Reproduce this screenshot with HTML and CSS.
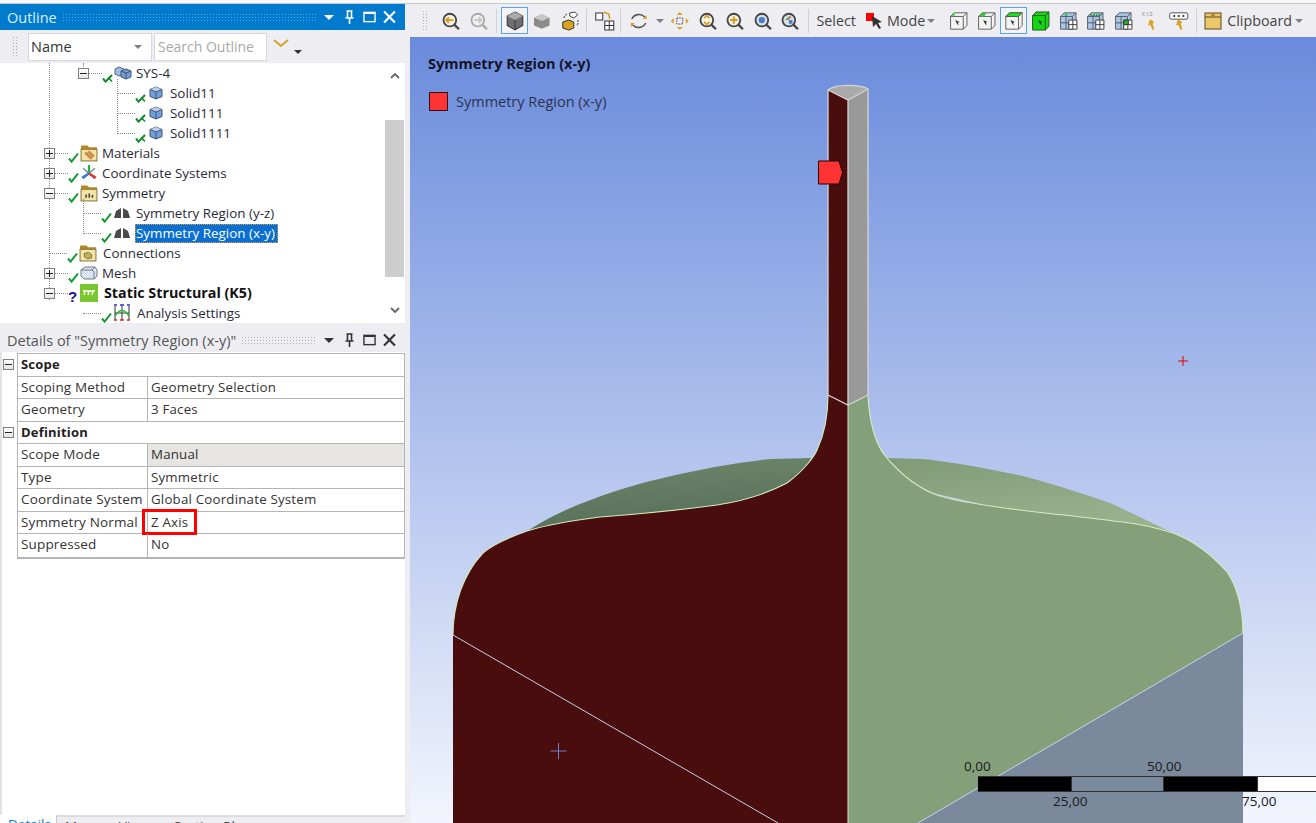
FILE: index.html
```html
<!DOCTYPE html>
<html lang="en">
<head>
<meta charset="utf-8">
<title>Symmetry Region (x-y)</title>
<link rel="stylesheet" href="styles.css">
</head>
<body>
<svg class="defs" width="0" height="0" aria-hidden="true">
  <defs>
    <linearGradient id="backL" x1="0" y1="0" x2="0.3" y2="1"><stop offset="0" stop-color="#71896d"/><stop offset="1" stop-color="#566f58"/></linearGradient>
    <linearGradient id="backR" x1="0" y1="0" x2="0.5" y2="1"><stop offset="0" stop-color="#7f9b76"/><stop offset="1" stop-color="#98b28e"/></linearGradient>
    <symbol id="ok" viewBox="0 0 11 11"><path d="M1 6.500 3.600 9.600 10 1.500" fill="none" stroke="#0f9a2a" stroke-width="2"/></symbol>
    <symbol id="okx" viewBox="0 0 11 11"><path d="M1 6.500 3.600 9.600 10 3" fill="none" stroke="#0f8a2a" stroke-width="2"/><path d="M6 5.500 10 9.500" stroke="#0f8a2a" stroke-width="1.600"/></symbol>
    <symbol id="cube" viewBox="0 0 14 14"><path d="M7 1 13 3.500V10.500L7 13 1 10.500V3.500Z" fill="#6f9fe0" stroke="#47566a"/><path d="M7 1 13 3.500 7 6 1 3.500Z" fill="#b9cdea"/><path d="M1 3.500 7 6 13 3.500M7 6V13" fill="none" stroke="#47566a"/></symbol>
    <symbol id="cubes" viewBox="0 0 18 14"><path d="M5 1 10 3V8L5 10 1 8V3Z" fill="#9dbbe6" stroke="#55657a"/><path d="M12 3 17 5V11L12 13 7 11V5Z" fill="#6f9fe0" stroke="#47566a"/><path d="M7 5 12 7 17 5M12 7V13" fill="none" stroke="#47566a"/></symbol>
    <symbol id="folder" viewBox="0 0 17 17"><path d="M1 1.500H7L8.500 3H16V6H1Z" fill="#b28a22"/><rect x="1" y="5" width="15" height="11" fill="#f3e4a5" stroke="#8c7a45"/></symbol>
    <symbol id="sym" viewBox="0 0 18 12"><path d="M1 11 3 4 8 1V11ZM10 1 15 4 17 11H10Z" fill="#4a4a4a"/></symbol>
    <symbol id="boxmini" viewBox="0 0 22 22"><path d="M2 6 6 2H20V16L16 20H2Z" fill="#f4f4f4" stroke="#555"/><path d="M2 6H16V20M16 6 20 2" fill="none" stroke="#555"/><path d="M7 10 12 12 10 13 11 16 9 14Z" fill="#333"/></symbol>
    <symbol id="mesh" viewBox="0 0 22 22"><path d="M2 6 6 2H19V16L15 20H2Z" fill="#a8c6ec" stroke="#555"/><path d="M2 6H15V20M15 6 19 2M8 6V20M2 13H15" fill="none" stroke="#555"/><path d="M11 10H20V20H11ZM15.500 10V20M11 15H20" fill="#fff" stroke="#333"/></symbol>
  </defs>
</svg>
<div class="topstrip"></div>
<main class="main">
  <aside class="side">
    <header class="paneltitle active">
      <span class="paneltitle-text">Outline</span>
      <span class="grip"></span>
      <span class="wincontrols">
        <i class="tri"></i>
        <svg class="winicon" viewBox="0 0 12 14"><path d="M3 1H9M4 1V8H8V1M2 8H10M6 8V14" fill="none" stroke="currentColor" stroke-width="1.600"/></svg>
        <svg class="winicon" viewBox="0 0 14 14"><rect x="1" y="2" width="12" height="10" fill="none" stroke="currentColor" stroke-width="1.500"/><path d="M1 3H13" stroke="currentColor" stroke-width="1.500"/></svg>
        <svg class="winicon" viewBox="0 0 12 12"><path d="M1 1 11 11M11 1 1 11" stroke="currentColor" stroke-width="2"/></svg>
      </span>
    </header>
    <div class="searchbar">
      <span class="vgrip"></span>
      <div class="combo"><span>Name</span><i class="tri grey"></i></div>
      <div class="search">Search Outline</div>
      <svg class="chev" viewBox="0 0 16 9"><path d="M1 1 8 7 15 1" fill="none" stroke="#d2a32a" stroke-width="2"/></svg>
      <i class="tri small"></i>
    </div>
    <div class="tree">
      <span class="vline v1"></span>
      <span class="vline v2"></span>
      <span class="vline v3"></span>
      <span class="vline v4"></span>
      <div class="row l2"><b class="exp minus"></b><span class="conn c13"></span><svg class="st"><use href="#okx"/></svg><svg class="ic18"><use href="#cubes"/></svg><span class="lbl g4">SYS-4</span></div>
      <div class="row l3"><span class="conn c18"></span><svg class="st"><use href="#okx"/></svg><svg class="ic14"><use href="#cube"/></svg><span class="lbl g7">Solid11</span></div>
      <div class="row l3"><span class="conn c18"></span><svg class="st"><use href="#okx"/></svg><svg class="ic14"><use href="#cube"/></svg><span class="lbl g7">Solid111</span></div>
      <div class="row l3"><span class="conn c18"></span><svg class="st"><use href="#okx"/></svg><svg class="ic14"><use href="#cube"/></svg><span class="lbl g7">Solid1111</span></div>
      <div class="row l1"><b class="exp plus"></b><span class="conn c13"></span><svg class="st"><use href="#ok"/></svg>
        <svg class="ic18" viewBox="0 0 17 17"><use href="#folder"/><path d="M5 8 11 14M8 7 13 12" stroke="#c9864a" stroke-width="2.500"/></svg><span class="lbl g4">Materials</span></div>
      <div class="row l1"><b class="exp plus"></b><span class="conn c13"></span><svg class="st"><use href="#ok"/></svg>
        <svg class="ic18" viewBox="0 0 17 17"><path d="M3 4 14 14M14 4 3 14" stroke="#7d8794" stroke-width="1.400"/><path d="M8.500 8V1" stroke="#1bb53a" stroke-width="2"/><path d="M8.500 9 2 13" stroke="#2f7fe0" stroke-width="2.400"/><path d="M8.500 9 15 13" stroke="#e0352f" stroke-width="2.400"/></svg><span class="lbl g4">Coordinate Systems</span></div>
      <div class="row l1"><b class="exp minus"></b><span class="conn c13"></span><svg class="st"><use href="#ok"/></svg>
        <svg class="ic18" viewBox="0 0 17 17"><use href="#folder"/><path d="M5 13V10H6.500V13ZM8 13V9H9.500V13ZM11 13V10.500H12.500V13Z" fill="#444"/></svg><span class="lbl g4">Symmetry</span></div>
      <div class="row l2leaf"><span class="conn c18"></span><svg class="st"><use href="#ok"/></svg><svg class="ic18 sym"><use href="#sym"/></svg><span class="lbl g5">Symmetry Region (y-z)</span></div>
      <div class="row l2leaf"><span class="conn c18"></span><svg class="st"><use href="#ok"/></svg><svg class="ic18 sym"><use href="#sym"/></svg><span class="lbl sel">Symmetry Region (x-y)</span></div>
      <div class="row l1leaf"><span class="conn c18"></span><svg class="st"><use href="#ok"/></svg>
        <svg class="ic18" viewBox="0 0 17 17"><use href="#folder"/><path d="M5 9 9 8 12 10V13L8 14 5 12Z" fill="#c6b05a" stroke="#6d5f33" stroke-width=".8"/></svg><span class="lbl g6">Connections</span></div>
      <div class="row l1"><b class="exp plus"></b><span class="conn c13"></span><svg class="st"><use href="#ok"/></svg>
        <svg class="ic18" viewBox="0 0 18 14"><path d="M1 4 5 1H15L17 4V10L14 13H4L1 10Z" fill="#dbe5f0" stroke="#6c7b8c"/><path d="M1 4H12L14 6V13M12 4 15 1" fill="none" stroke="#6c7b8c"/></svg><span class="lbl g4">Mesh</span></div>
      <div class="row l1"><b class="exp minus"></b><span class="conn c13"></span><span class="qm">?</span>
        <svg class="ic18" viewBox="0 0 18 18"><rect width="18" height="18" fill="#7ac62f"/><path d="M3 7H15M5 7 4 11M9 7 8 11M13 7 12 11" stroke="#fff" stroke-width="1.400" fill="none"/></svg><span class="lbl strong">Static Structural (K5)</span></div>
      <div class="row l2leaf"><span class="conn c18"></span><svg class="st"><use href="#ok"/></svg>
        <svg class="ic18" viewBox="0 0 18 18"><path d="M2 2V16M9 2V16M16 2V16M2 9H16" stroke="#333" fill="none"/><path d="M1 1H4M7 1H11M14 1H17" stroke="#2b2bd0" stroke-width="1.600"/><path d="M1 16H4M7 16H11M14 16H17" stroke="#e02020" stroke-width="1.600"/><path d="M2 12Q9 1 16 12" fill="none" stroke="#22c03a" stroke-width="1.500"/></svg><span class="lbl g6">Analysis Settings</span></div>
      <div class="scrollbar">
        <svg class="sarrow" viewBox="0 0 10 6"><path d="M1 5 5 1 9 5" fill="none" stroke="#666" stroke-width="1.800"/></svg>
        <div class="strack"><div class="sthumb"></div></div>
        <svg class="sarrow" viewBox="0 0 10 6"><path d="M1 1 5 5 9 1" fill="none" stroke="#666" stroke-width="1.800"/></svg>
      </div>
    </div>
    <header class="paneltitle detailstitle">
      <span class="paneltitle-text">Details of "Symmetry Region (x-y)"</span>
      <span class="grip"></span>
      <span class="wincontrols">
        <i class="tri"></i>
        <svg class="winicon" viewBox="0 0 12 14"><path d="M3 1H9M4 1V8H8V1M2 8H10M6 8V14" fill="none" stroke="currentColor" stroke-width="1.600"/></svg>
        <svg class="winicon" viewBox="0 0 14 14"><rect x="1" y="2" width="12" height="10" fill="none" stroke="currentColor" stroke-width="1.500"/><path d="M1 3H13" stroke="currentColor" stroke-width="1.500"/></svg>
        <svg class="winicon" viewBox="0 0 12 12"><path d="M1 1 11 11M11 1 1 11" stroke="currentColor" stroke-width="2"/></svg>
      </span>
    </header>
    <div class="details">
      <div class="dtable">
        <div class="drow head"><b class="exp minus out"></b><span class="dhead">Scope</span></div>
        <div class="drow"><span class="dk">Scoping Method</span><span class="dv">Geometry Selection</span></div>
        <div class="drow"><span class="dk">Geometry</span><span class="dv">3 Faces</span></div>
        <div class="drow head"><b class="exp minus out"></b><span class="dhead">Definition</span></div>
        <div class="drow"><span class="dk">Scope Mode</span><span class="dv ro">Manual</span></div>
        <div class="drow"><span class="dk">Type</span><span class="dv">Symmetric</span></div>
        <div class="drow"><span class="dk">Coordinate System</span><span class="dv">Global Coordinate System</span></div>
        <div class="drow"><span class="dk">Symmetry Normal</span><span class="dv">Z Axis<span class="redbox"></span></span></div>
        <div class="drow"><span class="dk">Suppressed</span><span class="dv">No</span></div>
      </div>
    </div>
    <nav class="tabs">
      <span class="tab on">Details</span>
      <span class="tab">Manage Views</span>
      <span class="tab">Section Planes</span>
    </nav>
  </aside>
  <section class="work">
    <div class="toolbar">
      <span class="vgrip"></span>
      <svg class="t w27" viewBox="0 0 22 22"><circle cx="10" cy="10" r="7" fill="#f6f3e6" stroke="#444" stroke-width="2"/><path d="M15 15 20 20" stroke="#444" stroke-width="2.500"/><path d="M6 10H14M9 7 6 10 9 13" fill="none" stroke="#d99a1c" stroke-width="2"/></svg>
      <svg class="t w27 dim" viewBox="0 0 22 22"><circle cx="10" cy="10" r="7" fill="#f3f3f3" stroke="#999" stroke-width="2"/><path d="M15 15 20 20" stroke="#999" stroke-width="2.500"/><path d="M6 10H14M11 7 14 10 11 13" fill="none" stroke="#bbb" stroke-width="2"/></svg>
      <i class="tsep"></i>
      <span class="tbox"><svg viewBox="0 0 18 18"><path d="M9 1 16 4.500V13L9 17 2 13V4.500Z" fill="#6e6e6e" stroke="#3c3c3c"/><path d="M9 1 16 4.500 9 8 2 4.500Z" fill="#a9a9a9"/><path d="M9 8V17" stroke="#3c3c3c"/></svg></span>
      <svg class="t w27" viewBox="0 0 18 18"><path d="M9 3 16 6V13L9 16 2 13V6Z" fill="#8b8b8b"/><path d="M9 3 16 6 9 9 2 6Z" fill="#c6c6c6"/></svg>
      <svg class="t w27" viewBox="0 0 20 20"><path d="M3 11 9 9 14 11V17L9 19 3 17Z" fill="#d9a21f" stroke="#333"/><path d="M10 2 15 1 18 4 14 7 10 5Z" fill="#fff" stroke="#444"/><path d="M4 7A8 8 0 0 1 8 2.500M18 9A8 8 0 0 1 17 15" fill="none" stroke="#666" stroke-width="1.300" stroke-dasharray="2 1"/></svg>
      <i class="tsep gap8"></i>
      <svg class="t w27" viewBox="0 0 20 20"><rect x="1" y="2" width="7" height="7" fill="#fff" stroke="#333"/><rect x="10" y="10" width="9" height="9" fill="#fff" stroke="#333"/><path d="M14.500 10V19M10 14.500H19" stroke="#333"/><path d="M9 1 14 3 15 8" fill="none" stroke="#d99a1c" stroke-width="1.500"/></svg>
      <i class="tsep tight"></i>
      <svg class="t w27" viewBox="0 0 20 20"><path d="M3 8A8 8 0 0 1 16 6" fill="none" stroke="#555" stroke-width="1.600"/><path d="M17 12A8 8 0 0 1 4 14" fill="none" stroke="#555" stroke-width="1.600"/><path d="M14 8H18V4ZM6 12H2V16Z" fill="#d9a21f"/></svg>
      <i class="tri grey tb"></i>
      <svg class="t w27" viewBox="0 0 20 20"><path d="M10 1 13 4H7ZM10 19 7 16H13ZM1 10 4 7V13ZM19 10 16 13V7Z" fill="#d9a21f"/><path d="M7 7H13V13H7Z" fill="none" stroke="#444" stroke-dasharray="1.500 1"/></svg>
      <svg class="t w27" viewBox="0 0 22 22"><circle cx="10" cy="10" r="7" fill="#f6f3e6" stroke="#444" stroke-width="2"/><path d="M15 15 20 20" stroke="#444" stroke-width="2.500"/><path d="M7 8 10 5 13 8M7 12 10 15 13 12" fill="none" stroke="#d99a1c" stroke-width="1.800"/></svg>
      <svg class="t w27" viewBox="0 0 22 22"><circle cx="10" cy="10" r="7" fill="#f6f3e6" stroke="#444" stroke-width="2"/><path d="M15 15 20 20" stroke="#444" stroke-width="2.500"/><path d="M6 10H14M10 6V14" stroke="#d99a1c" stroke-width="2.200"/></svg>
      <svg class="t w27" viewBox="0 0 22 22"><circle cx="10" cy="10" r="7" fill="#d8e0e8" stroke="#444" stroke-width="2"/><path d="M15 15 20 20" stroke="#444" stroke-width="2.500"/><circle cx="10" cy="10" r="3.500" fill="#4a7fc0"/></svg>
      <svg class="t w27" viewBox="0 0 22 22"><circle cx="10" cy="10" r="7" fill="#d8e0e8" stroke="#444" stroke-width="2"/><path d="M15 15 20 20" stroke="#444" stroke-width="2.500"/><path d="M6 10H10V6Z" fill="#3fae49"/><path d="M10 10H14V14H10Z" fill="#4a7fc0"/><path d="M10 6H13L10 10Z" fill="#d9574a"/></svg>
      <i class="tsep"></i>
      <span class="tlabel select">Select</span>
      <svg class="modeicon" viewBox="0 0 18 18"><rect x="0" y="1" width="8" height="8" fill="#f00"/><path d="M6 4 16 10 12 11 15 16 13 17 10 12 7 15Z" fill="#333"/></svg>
      <span class="tlabel mode">Mode</span><i class="tri grey tb2"></i>
      <span class="boxes">
        <svg class="t w27" viewBox="0 0 22 22"><use href="#boxmini"/><circle cx="5" cy="4" r="1.500" fill="#2ecc2e"/></svg>
        <svg class="t w27" viewBox="0 0 22 22"><use href="#boxmini"/><path d="M3 6 6 2H11L8 6Z" fill="#2ecc2e"/></svg>
        <span class="tbox"><svg viewBox="0 0 22 22"><use href="#boxmini"/><path d="M2 6 6 2H20L16 6Z" fill="#19e619" stroke="#555"/></svg></span>
        <svg class="t w27" viewBox="0 0 22 22"><path d="M2 5 6 1H20V17L16 21H2Z" fill="#14d714" stroke="#205020"/><path d="M2 5H16V21M16 5 20 1" fill="none" stroke="#205020"/><path d="M8 10 13 12 11 13 12 16 10 14Z" fill="#234"/></svg>
        <svg class="t w27" viewBox="0 0 22 22"><use href="#mesh"/><circle cx="8" cy="4" r="1.500" fill="#2ecc2e"/></svg>
        <svg class="t w27" viewBox="0 0 22 22"><use href="#mesh"/><path d="M5 4.500H16" stroke="#2a9a2a" stroke-width="2" stroke-dasharray="2 1"/></svg>
        <svg class="t w27" viewBox="0 0 22 22"><use href="#mesh"/><path d="M11 10H16V15H11Z" fill="#2ab02a" stroke="#333"/></svg>
        <svg class="t w27" viewBox="0 0 22 22"><text x="1" y="6" class="xyz">X.Y.Z</text><path d="M10 9 15 12 13 14 15 20 13 21 10.500 15 8 16Z" fill="#d9a21f"/></svg>
        <svg class="t w27" viewBox="0 0 22 22"><rect x="1" y="2" width="20" height="7" rx="2" fill="#fff" stroke="#444"/><path d="M5 5.500H7M10 5.500H12M15 5.500H17" stroke="#444" stroke-width="2"/><path d="M10 9 15 12 13 14 15 20 13 21 10.500 15 8 16Z" fill="#d9a21f"/></svg>
      </span>
      <i class="tsep"></i>
      <svg class="t clip" viewBox="0 0 18 18"><rect x="1" y="1" width="16" height="16" fill="#edc868" stroke="#5a4a20"/><path d="M1 5H17" stroke="#5a4a20"/><path d="M7 1H11V4H7Z" fill="#b58c2d"/></svg>
      <span class="tlabel">Clipboard</span><i class="tri grey tb3"></i>
    </div>
    <div class="viewport">
      <svg class="model" viewBox="410 37 906 786" preserveAspectRatio="none">
        <path class="backleft" d="M527 531C545 520 560 512 580 504C610 492 640 483 667 477C700 469 740 462 770 459L811 458L800 480L720 510Z"/>
        <path class="backright" d="M887 458L923 459C960 463 995 470 1027 477C1055 485 1085 494 1110 503C1132 513 1152 523 1173 533L1050 520L920 490Z"/>
        <path class="grey" d="M1243 633 V823H918Z"/>
        <path class="green" d="M848 405 868 395C869 420 875 445 887 458C900 474 920 490 940 496C960 502 1000 508 1053 514C1085 517 1105 520 1123 522C1140 524 1160 529 1173 533C1192 540 1211 554 1227 572C1235 583 1243 605 1243 633L918 823H848Z"/>
        <path class="red" d="M828 395 848 405V823H453V635C453 605 463 574 483 553C493 544 510 537 527 531C550 524 575 520 600 517C640 514 680 510 717 505C750 500 770 492 787 483C805 470 815 455 817 450C824 435 828 415 828 395Z"/>
        <path class="edge-g" d="M868 395C869 420 875 445 887 458C900 474 920 490 940 496C960 502 1000 508 1053 514C1085 517 1105 520 1123 522C1140 524 1160 529 1173 533C1192 540 1211 554 1227 572C1235 583 1243 605 1243 633"/>
        <path class="edge-g" d="M828 395C828 415 824 435 817 450C815 455 805 470 787 483C770 492 750 500 717 505C680 510 640 514 600 517C575 520 550 524 527 531C510 537 493 544 483 553C463 574 453 605 453 635"/>
        <path class="edge-w" d="M453 635 778 823M1243 633 918 823"/>
        <path class="red" d="M828 90 848 100V405L828 395Z"/>
        <path class="col" d="M848 100 868 89V395L848 405Z"/>
        <path class="captop" d="M828 90C835 84 860 84 868 89L848 100Z"/>
        <path class="edge-l" d="M828 395V90C835 84 860 84 868 89V395M828 90 848 100 868 89M848 100V405M828 395 848 405 868 395"/>
        <path class="edge-front" d="M848 405V823"/>
        <path class="marker" d="M818.500 161H839L842.500 172.500 839 184H818.500Z"/>
        <path class="bluecross" d="M558.500 743V759M550.500 751H566.500"/>
        <path class="redcross" d="M1183 356V366M1178 361H1188"/>
      </svg>
      <div class="legend">
        <div class="legend-title">Symmetry Region (x-y)</div>
        <div class="legend-item"><i class="swatch"></i><span>Symmetry Region (x-y)</span></div>
      </div>
      <div class="scale">
        <div class="scale-top"><span class="s0">0,00</span><span class="s50">50,00</span></div>
        <div class="bar"><i class="black"></i><i class="clear"></i><i class="black"></i><i class="white"></i></div>
        <div class="scale-bot"><span class="s25">25,00</span><span class="s75">75,00</span></div>
      </div>
    </div>
  </section>
</main>
</body>
</html>
```
FILE: styles.css
```css
* { box-sizing: border-box; }
html, body { margin: 0; height: 823px; overflow: hidden; }
body {
  width: 1316px;
  display: flex;
  flex-direction: column;
  background: #f0f0f4;
  font-family: "Open Sans", "Noto Sans", sans-serif;
  font-size: 13.400px;
  color: #222;
}
.defs { position: absolute; }
.topstrip { height: 4px; flex: none; background: #f7f7f7; border-bottom: 1px solid #c9c9cc; }
.main { flex: 1; display: flex; min-height: 0; }

/* left column */
.side { width: 410px; flex: none; display: flex; flex-direction: column; background: #eeeef2; padding-right: 5px; }
.paneltitle { height: 27px; flex: none; display: flex; align-items: center; padding: 0 9px 0 7px; color: #444; font-size: 14.500px; background: #eeeef2; }
.paneltitle.active { background: #007acc; color: #fff; height: 26px; }
.detailstitle { height: 29px; padding-top: 5px; }
.paneltitle-text { white-space: nowrap; color: #555; }
.active .paneltitle-text { color: #dceefa; }
.grip { flex: 1; height: 8px; margin: 0 8px 0 5px; background-image: radial-gradient(circle, rgba(120,120,120,.5) .7px, transparent .8px); background-size: 3px 3px; }
.active .grip { background-image: radial-gradient(circle, rgba(255,255,255,.35) .7px, transparent .8px); }
.wincontrols { display: flex; align-items: center; gap: 7px; }
.wincontrols .tri { margin-right: 2px; }
.winicon { width: 13px; height: 14px; color: #333; }
.active .winicon { color: #fff; }
.tri { display: block; width: 0; height: 0; border-left: 5px solid transparent; border-right: 5px solid transparent; border-top: 5px solid #333; }
.active .tri { border-top-color: #fff; }
.tri.grey { border-top-color: #808080; border-left-width: 4px; border-right-width: 4px; border-top-width: 4px; }
.tri.small { border-left-width: 4px; border-right-width: 4px; border-top-width: 4px; margin: 10px 0 0 5px; }

.searchbar { height: 33px; flex: none; display: flex; align-items: center; padding-left: 12px; background: #eeeef2; }
.vgrip { width: 7px; height: 22px; background-image: radial-gradient(circle, #aaa .8px, transparent .9px); background-size: 3px 3px; flex: none; }
.combo { width: 124px; height: 28px; margin-left: 9px; display: flex; align-items: center; justify-content: space-between; padding: 0 9px 0 2px; background: #fff; border: 1px solid #d6d6e0; font-size: 14.500px; color: #333; }
.search { width: 113px; height: 28px; margin-left: 2px; display: flex; align-items: center; padding-left: 3px; background: #fff; border: 1px solid #d6d6e0; color: #a9a9a9; font-size: 14px; white-space: nowrap; }
.chev { width: 16px; height: 9px; margin: 0 0 6px 6px; }

.tree { position: relative; height: 260px; flex: none; background: #fff; overflow: hidden; }
.row { height: 20px; display: flex; align-items: center; white-space: nowrap; }
.l1 { padding-left: 44px; }
.l1leaf { padding-left: 49px; }
.l2 { padding-left: 78px; }
.l2leaf { padding-left: 83px; }
.l3 { padding-left: 117px; }
.exp { display: block; flex: none; width: 11px; height: 11px; border: 1px solid #808080; background: linear-gradient(#fff, #e6e6e6); position: relative; }
.exp::before { content: ""; position: absolute; left: 1px; right: 1px; top: 4px; height: 1px; background: #222; }
.plus::after { content: ""; position: absolute; top: 1px; bottom: 1px; left: 4px; width: 1px; background: #222; }
.conn { flex: none; height: 0; border-top: 1px dotted #888; }
.c13 { width: 13px; }
.c18 { width: 18px; }
.st { flex: none; width: 11px; height: 11px; margin-top: 8px; }
.qm { flex: none; width: 11px; margin-top: 6px; color: #14148c; font: bold 15px "Liberation Sans", sans-serif; }
.ic18 { flex: none; width: 18px; height: 18px; margin-left: 1px; }
.ic18.sym { height: 12px; }
.l3 .st { margin-right: 3px; }
.ic14 { flex: none; width: 14px; height: 14px; }
.lbl { color: #2a2a3a; }
.g4 { margin-left: 4px; }
.g5 { margin-left: 5px; }
.g6 { margin-left: 6px; }
.g7 { margin-left: 7px; }
.sel { margin-left: 4px; padding: 0 3px 0 1px; height: 19px; line-height: 18px; background: #0a6fd0; color: #fff; outline: 1px dotted #e0a040; outline-offset: -1px; }
.strong { margin-left: 6px; font-weight: 700; font-size: 14.300px; line-height: 18px; margin-bottom: 1px; color: #111; }
.vline { position: absolute; width: 0; border-left: 1px dotted #888; }
.v1 { left: 49px; top: 0; height: 237px; }
.v2 { left: 83px; top: 0; height: 6px; }
.v3 { left: 117px; top: 16px; height: 55px; }
.v4 { left: 83px; top: 136px; height: 35px; }
.scrollbar { position: absolute; right: 1px; top: 0; bottom: 0; width: 19px; display: flex; flex-direction: column; align-items: center; background: #fff; }
.sarrow { width: 10px; height: 6px; margin: 10px 0; flex: none; }
.strack { flex: 1; width: 100%; position: relative; }
.sthumb { position: absolute; left: 0; right: 0; top: 31px; height: 157px; background: #cdcdcd; }

.details { flex: 1; min-height: 0; background: #fff; padding: 1px 0 0 15px; border-left: 2px solid #e4e4e8; position: relative; }
.dtable { border: 1px solid #b5b5b5; border-bottom-width: 2px; }
.drow { height: 22.500px; display: flex; align-items: stretch; border-bottom: 1px solid #b5b5b5; position: relative; white-space: nowrap; color: #333; line-height: 20px; letter-spacing: .2px; }
.drow:last-child { border-bottom: 0; }
.dk { width: 130px; flex: none; padding-left: 3px; border-right: 1px solid #b5b5b5; font-size: 13.500px; letter-spacing: .15px; }
.dv { flex: 1; padding-left: 3px; position: relative; font-size: 13.300px; }
.dv.ro { background: #e6e5e1; }
.dhead { padding-left: 3px; font-weight: 700; font-size: 13px; color: #222; }
.exp.out { position: absolute; left: -15px; top: 5px; }
.redbox { position: absolute; left: -6px; top: -3px; width: 55px; height: 26px; border: 3px solid #f00; }

.tabs { height: 8px; flex: none; display: flex; background: #eeeef2; border-top: 2px solid #dadae2; font-size: 13.500px; }
.tab { padding: 0 0 0 8px; margin-right: 11px; line-height: 18px; height: 30px; color: #444; white-space: nowrap; }
.tab.on { width: 57px; margin-right: 0; color: #007acc; background: #fff; border-right: 1px solid #c8c8d0; margin-top: -2px; }

/* right column */
.work { flex: 1; min-width: 0; display: flex; flex-direction: column; }
.toolbar { height: 33px; flex: none; display: flex; align-items: center; padding-left: 12px; background: #eeeef2; }
.t { flex: none; height: 20px; }
.w27 { width: 27.500px; }
.toolbar .vgrip { margin-right: 8px; }
.dim { opacity: .8; }
.tsep { flex: none; width: 1px; height: 24px; background: #d0d0d6; margin: 0 4px; }
.tsep.gap8 { margin-left: 3px; margin-right: 4px; }
.tsep.tight { margin-left: 1px; margin-right: 4px; }
.tbox { flex: none; width: 27px; height: 27px; border: 1px solid #55a5ee; background: #f4f4f8; display: flex; align-items: center; justify-content: center; }
.tbox svg { width: 20px; height: 20px; }
.tri.tb { margin: 0 2px 0 4px; }
.tlabel { font-size: 14.300px; color: #444; white-space: nowrap; }
.select { margin-left: 4px; }
.modeicon { width: 18px; height: 18px; margin-left: 10px; flex: none; }
.mode { margin-left: 3px; }
.tri.tb2 { margin: 0 10px 0 2px; }
.boxes { display: flex; align-items: center; }
.clip { width: 18px; margin: 0 5px 0 3px; }
.tri.tb3 { margin-left: 3px; }
.xyz { font: 5px "Liberation Sans", sans-serif; fill: #888; }

.viewport { flex: 1; position: relative; overflow: hidden; background: linear-gradient(#6a8bdc, #f2f5fd); }
.model { position: absolute; inset: 0; width: 100%; height: 100%; }
.red { fill: #4a0d0d; }
.green { fill: #84a07a; }
.grey { fill: #7a8a9c; }
.backleft { fill: url(#backL); }
.backright { fill: url(#backR); }
.col { fill: #999; }
.captop { fill: #aaa; }
.edge-g { fill: none; stroke: #d4ecc0; stroke-width: 1.100; }
.edge-w { fill: none; stroke: #c0cfe6; stroke-width: 1; }
.edge-l { fill: none; stroke: #d4d4d4; stroke-width: 1.300; }
.edge-front { fill: none; stroke: #d4e4c8; stroke-width: 1; }
.marker { fill: #ff3333; stroke: #200; stroke-width: 1; }
.bluecross { fill: none; stroke: #6e7fc0; stroke-width: 1; }
.redcross { fill: none; stroke: #e00000; stroke-width: 1; }
.legend { position: absolute; left: 18px; top: 17px; }
.legend-title { font-weight: 700; font-size: 14.500px; color: #141428; height: 20px; line-height: 20px; white-space: nowrap; }
.legend-item { display: flex; align-items: center; gap: 8px; margin-top: 18px; font-size: 14.500px; color: #2c3350; white-space: nowrap; }
.swatch { width: 19px; height: 19px; margin-left: 1px; background: #ff3333; border: 1px solid #301018; }
.scale { position: absolute; left: 554px; top: 720px; width: 352px; font-size: 13.500px; color: #1a1a1a; }
.scale-top, .scale-bot { position: relative; height: 19px; }
.scale span { position: absolute; top: 0; line-height: 19px; }
.s0 { left: 0; }
.s50 { left: 183px; }
.s25 { left: 89px; }
.s75 { left: 278px; }
.bar { display: flex; height: 16px; margin-left: 14px; border: 1px solid #333; border-width: 1px 0; width: 338px; }
.bar i { display: block; flex: none; width: 93px; }
.black { background: #000; }
.clear { border-left: 1px solid #333; border-right: 1px solid #333; }
.bar .white { background: #fff; width: 59px; border-left: 1px solid #333; }
```
